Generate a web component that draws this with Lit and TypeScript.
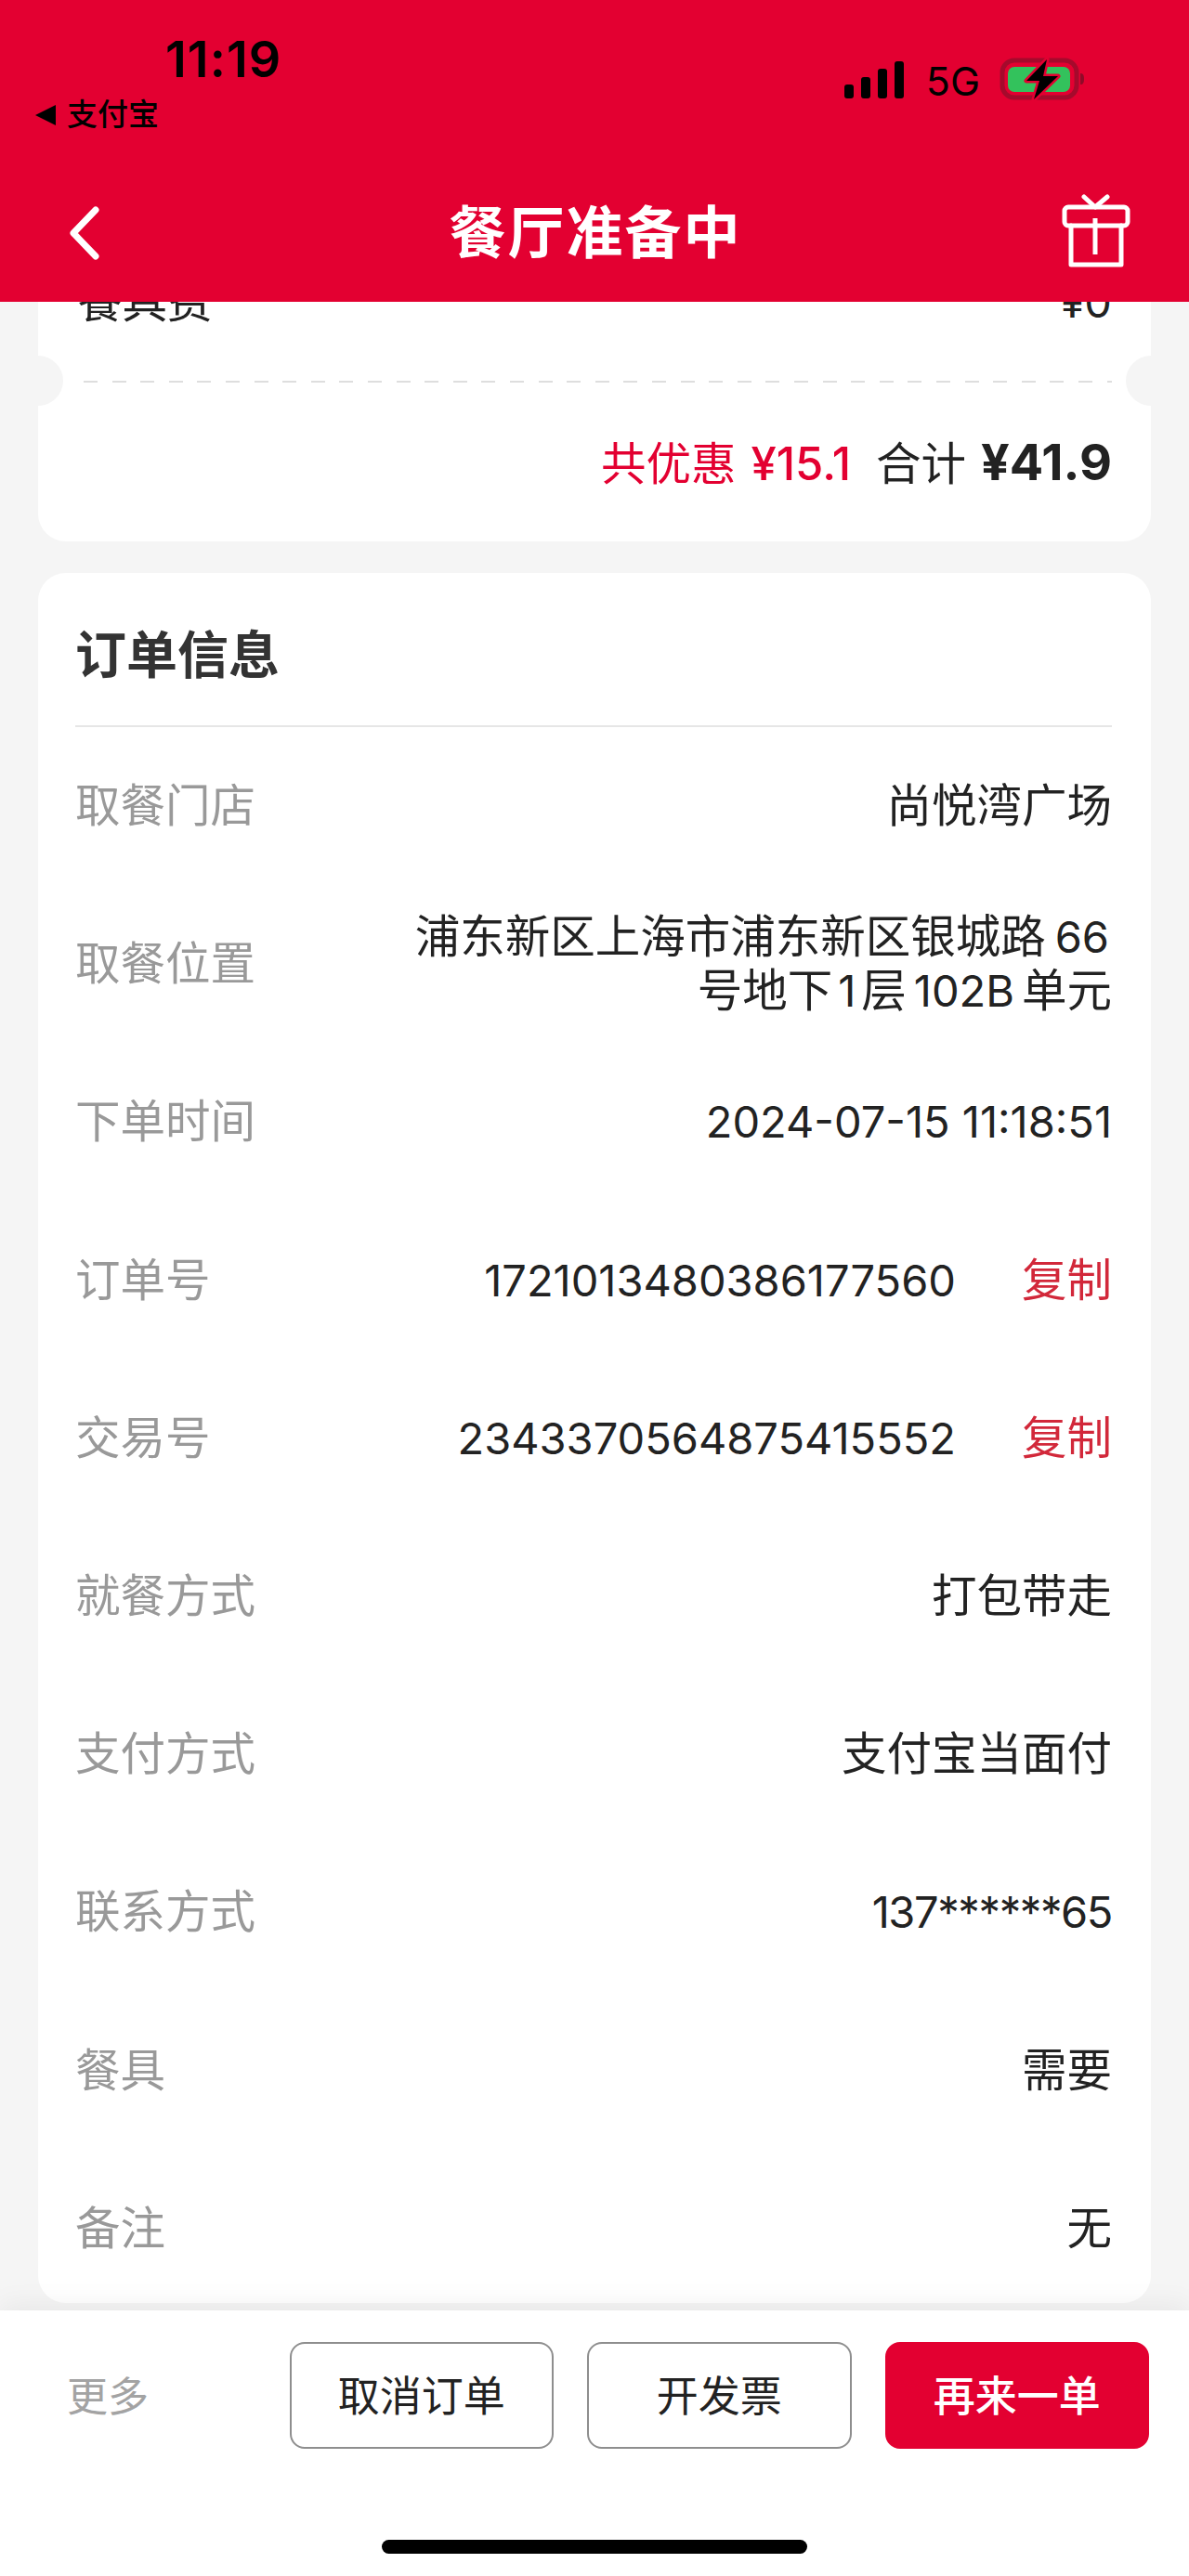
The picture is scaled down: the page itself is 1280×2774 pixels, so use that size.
import { LitElement, html, css } from 'lit';
import { customElement } from 'lit/decorators.js';

const rows: { label: string; value: unknown; num?: string; copy?: boolean }[] = [
  { label: '取餐门店', value: '尚悦湾广场' },
  {
    label: '取餐位置',
    value: html`浦东新区上海市浦东新区银城路<span class="num sp">66</span><br />号地下<span class="num sp-r">1</span>层<span class="num sp-b">102B</span>单元`,
  },
  { label: '下单时间', value: '2024-07-15 11:18:51', num: 'num' },
  { label: '订单号', value: '1721013480386177560', num: 'num', copy: true },
  { label: '交易号', value: '2343370564875415552', num: 'num', copy: true },
  { label: '就餐方式', value: '打包带走' },
  { label: '支付方式', value: '支付宝当面付' },
  { label: '联系方式', value: '137******65', num: 'num tight' },
  { label: '餐具', value: '需要' },
  { label: '备注', value: '无' },
];

@customElement('app-root')
export class AppRoot extends LitElement {
  static styles = css`
    :host {
      display: flex;
      flex-direction: column;
      width: 1280px;
      height: 2774px;
      overflow: hidden;
      background: #f5f5f5;
      color: #222;
      font-family: "Liberation Sans", "Noto Sans CJK SC", sans-serif;
      font-size: 48.5px;
    }
    .num {
      font-family: Inter, "Liberation Sans", sans-serif;
      font-size: 47px;
    }
    .tight {
      letter-spacing: -1.4px;
    }

    /* red top area */
    .top {
      flex: none;
      height: 325px;
      background: #e30031;
      position: relative;
      z-index: 2;
    }
    .status {
      height: 177px;
      display: flex;
      justify-content: space-between;
      color: #000;
    }
    .status-left {
      padding-left: 38px;
    }
    .time {
      margin: 35px 0 0 140px;
      font-family: Inter, "Liberation Sans", sans-serif;
      font-size: 54px;
      line-height: 58px;
      font-weight: 600;
      letter-spacing: 1px;
    }
    .from {
      display: flex;
      align-items: center;
      gap: 12px;
      margin-top: 11px;
      font-size: 33px;
      line-height: 40px;
      font-weight: 500;
    }
    .status-right {
      display: flex;
      align-items: flex-start;
      padding: 62px 112px 0 0;
    }
    .signal {
      margin: 4px 24px 0 0;
    }
    .net {
      font-family: Inter, "Liberation Sans", sans-serif;
      font-size: 43px;
      line-height: 50px;
      font-weight: 400;
      margin-right: 21px;
    }
    .nav {
      height: 148px;
      display: grid;
      grid-template-columns: 1fr auto 1fr;
      align-items: center;
      color: #fff;
    }
    .back {
      margin-left: 70px;
      display: block;
    }
    .title {
      font-size: 61px;
      line-height: 72px;
      font-weight: 700;
      letter-spacing: 2px;
      padding: 2px 0 0 2px;
    }
    .gift {
      justify-self: end;
      margin: -4px 60px 0 0;
      display: block;
    }

    /* scrolled content */
    .scroll {
      flex: 1;
      min-height: 0;
      overflow: hidden;
      padding: 0 41px;
    }
    .card {
      background: #fff;
      border-radius: 30px;
    }
    .price {
      position: relative;
      height: 287px;
      margin-top: -29px;
      border-radius: 0 0 30px 30px;
      padding: 0 42px;
    }
    .fee {
      display: flex;
      justify-content: space-between;
      align-items: baseline;
      line-height: 58px;
      height: 114px;
    }
    .notch {
      position: absolute;
      top: 87px;
      width: 54px;
      height: 54px;
      border-radius: 50%;
      background: #f5f5f5;
    }
    .notch.l {
      left: -27px;
    }
    .notch.r {
      right: -27px;
    }
    .dash {
      height: 2px;
      margin: 0 0 0 7px;
      background: repeating-linear-gradient(to right, #dedede 0 15px, transparent 15px 30.6px);
    }
    .total {
      display: flex;
      justify-content: flex-end;
      align-items: baseline;
      margin-top: 57px;
      line-height: 58px;
    }
    .save {
      color: #e30031;
    }
    .save .num {
      font-size: 49px;
      font-weight: 500;
      margin-left: 16px;
    }
    .sum {
      margin-left: 27px;
    }
    .sum .num {
      font-size: 54px;
      font-weight: 700;
      margin-left: 16px;
    }

    .info {
      margin-top: 34px;
      padding: 0 42px 0 40px;
      height: 1863px;
      overflow: hidden;
    }
    .info h2 {
      margin: 0;
      height: 166px;
      box-sizing: border-box;
      padding-top: 55px;
      border-bottom: 2px solid #e6e6e6;
      font-size: 55px;
      line-height: 68px;
      font-weight: 700;
      color: #333;
    }
    .rows {
      display: grid;
      grid-auto-rows: 170.2px;
    }
    .row {
      display: flex;
      align-items: center;
      justify-content: space-between;
      line-height: 58px;
    }
    .label {
      color: #999;
    }
    .value {
      display: flex;
      align-items: center;
      text-align: right;
    }
    .sp {
      margin: 0 3px 0 10px;
    }
    .sp-r {
      margin: 0 6px;
    }
    .sp-b {
      margin: 0 8px;
    }
    .copy {
      margin-left: 71px;
      color: #d2283a;
    }

    /* bottom actions */
    .bottom {
      flex: none;
      height: 286px;
      box-sizing: border-box;
      padding-top: 34px;
      background: #fff;
      box-shadow: 0 -6px 28px rgba(0, 0, 0, 0.06);
      position: relative;
      z-index: 2;
    }
    .actions {
      display: flex;
      align-items: center;
      gap: 36px;
      padding: 0 43px 0 72px;
    }
    .more {
      margin: -4px auto 0 0;
      font-size: 44px;
      color: #a3a3a3;
    }
    .btn {
      width: 284.5px;
      height: 115px;
      box-sizing: border-box;
      border: 2px solid #8e8e8e;
      border-radius: 16px;
      background: #fff;
      color: #222;
      font: inherit;
      font-size: 45px;
      padding: 0 0 4px;
    }
    .btn.primary {
      background: #e30031;
      border-color: #e30031;
      color: #fff;
      font-weight: 500;
    }
    .home {
      width: 458px;
      height: 15px;
      margin: 98px auto 0;
      border-radius: 8px;
      background: #000;
    }
  `;

  render() {
    return html`
      <header class="top">
        <div class="status">
          <div class="status-left">
            <div class="time">11:19</div>
            <div class="from">
              <svg width="22" height="22" viewBox="0 0 22 22"><polygon points="0,11 22,0 22,22" fill="#000" /></svg>
              <span>支付宝</span>
            </div>
          </div>
          <div class="status-right">
            <svg class="signal" width="64" height="40" viewBox="0 0 64 40" fill="#000">
              <rect x="0" y="25" width="10" height="15" rx="3" />
              <rect x="18" y="17" width="10" height="23" rx="3" />
              <rect x="36" y="8" width="10" height="32" rx="3" />
              <rect x="54" y="0" width="10" height="40" rx="3" />
            </svg>
            <span class="net">5G</span>
            <svg width="92" height="46" viewBox="0 0 92 46">
              <rect x="3" y="3" width="80" height="40" rx="13" fill="none" stroke="#a50a2c" stroke-width="5" />
              <rect x="9" y="10" width="67" height="27" rx="7" fill="#33c25c" />
              <path d="M87 17c3 0 4 2 4 6s-1 6-4 6z" fill="#8f0a28" />
              <path d="M51 2 29 25h14l-6 20 26-25H47z" fill="#000" stroke="#e30031" stroke-width="5" paint-order="stroke" stroke-linejoin="round" />
            </svg>
          </div>
        </div>
        <div class="nav">
          <svg class="back" width="40" height="60" viewBox="0 0 40 60" fill="none" stroke="#fff" stroke-width="7" stroke-linecap="round" stroke-linejoin="round">
            <polyline points="33,5 9,30 33,55" />
          </svg>
          <div class="title">餐厅准备中</div>
          <svg class="gift" width="80" height="80" viewBox="0 0 80 80" fill="none" stroke="#fff" stroke-width="5" stroke-linecap="round" stroke-linejoin="round">
            <path d="M27 3 39 14 52 3" />
            <rect x="6" y="14" width="68" height="20" rx="4" />
            <path d="M13 34v42h54V34" />
            <path d="M39 26v39" stroke-linecap="butt" />
          </svg>
        </div>
      </header>

      <div class="scroll">
        <section class="card price">
          <div class="fee"><span>餐具费</span><span class="num">¥0</span></div>
          <i class="notch l"></i>
          <i class="notch r"></i>
          <div class="dash"></div>
          <div class="total">
            <span class="save">共优惠<span class="num">¥15.1</span></span>
            <span class="sum">合计<span class="num">¥41.9</span></span>
          </div>
        </section>

        <section class="card info">
          <h2>订单信息</h2>
          <div class="rows">
            ${rows.map(
              (r) => html`
                <div class="row">
                  <span class="label">${r.label}</span>
                  <span class="value">
                    <span class=${r.num ?? ''}>${r.value}</span>
                    ${r.copy ? html`<span class="copy">复制</span>` : ''}
                  </span>
                </div>
              `
            )}
          </div>
        </section>
      </div>

      <footer class="bottom">
        <div class="actions">
          <span class="more">更多</span>
          <button class="btn">取消订单</button>
          <button class="btn">开发票</button>
          <button class="btn primary">再来一单</button>
        </div>
        <div class="home"></div>
      </footer>
    `;
  }
}
